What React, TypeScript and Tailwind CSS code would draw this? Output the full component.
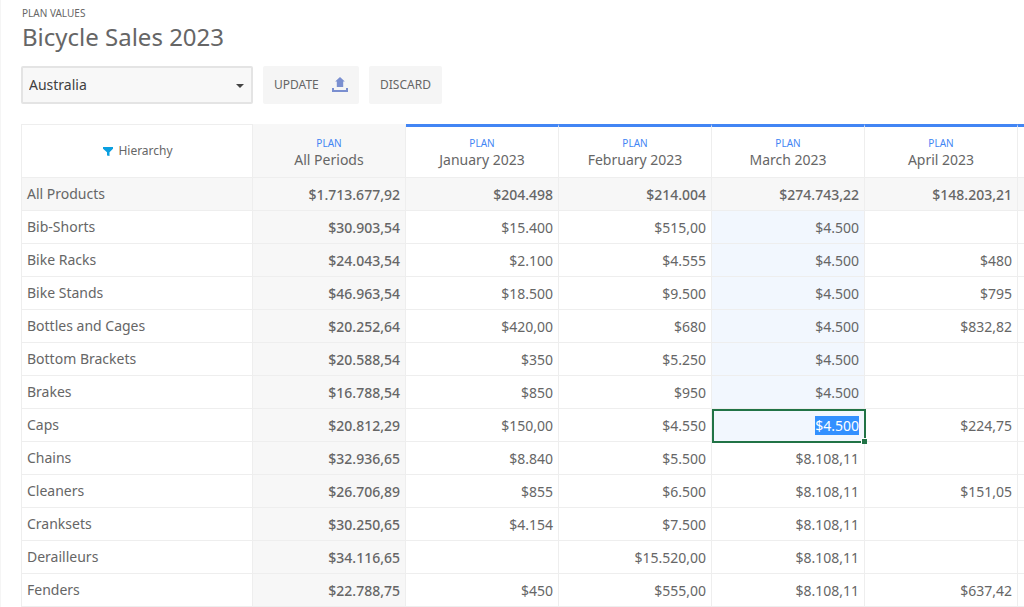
import { useEffect, useRef, useState } from "react";

type Row = { name: string; total: string; months: string[] };

const months = ["January 2023", "February 2023", "March 2023", "April 2023"];

const summary: Row = {
  name: "All Products",
  total: "$1.713.677,92",
  months: ["$204.498", "$214.004", "$274.743,22", "$148.203,21"],
};

const rows: Row[] = [
  { name: "Bib-Shorts", total: "$30.903,54", months: ["$15.400", "$515,00", "$4.500", ""] },
  { name: "Bike Racks", total: "$24.043,54", months: ["$2.100", "$4.555", "$4.500", "$480"] },
  { name: "Bike Stands", total: "$46.963,54", months: ["$18.500", "$9.500", "$4.500", "$795"] },
  { name: "Bottles and Cages", total: "$20.252,64", months: ["$420,00", "$680", "$4.500", "$832,82"] },
  { name: "Bottom Brackets", total: "$20.588,54", months: ["$350", "$5.250", "$4.500", ""] },
  { name: "Brakes", total: "$16.788,54", months: ["$850", "$950", "$4.500", ""] },
  { name: "Caps", total: "$20.812,29", months: ["$150,00", "$4.550", "$4.500", "$224,75"] },
  { name: "Chains", total: "$32.936,65", months: ["$8.840", "$5.500", "$8.108,11", ""] },
  { name: "Cleaners", total: "$26.706,89", months: ["$855", "$6.500", "$8.108,11", "$151,05"] },
  { name: "Cranksets", total: "$30.250,65", months: ["$4.154", "$7.500", "$8.108,11", ""] },
  { name: "Derailleurs", total: "$34.116,65", months: ["", "$15.520,00", "$8.108,11", ""] },
  { name: "Fenders", total: "$22.788,75", months: ["$450", "$555,00", "$8.108,11", "$637,42"] },
];

const ACTIVE_ROW = 6;
const ACTIVE_COL = 2;

function UploadIcon() {
  return (
    <svg width="16" height="16" viewBox="0 0 16 16" fill="#7a8fd0" aria-hidden="true">
      <path d="M8 0 12.8 4.6H11.2V10H4.8V4.6H3.2Z" />
      <path d="M0 11h2v2h12v-2h2v4H0Z" />
    </svg>
  );
}

function FunnelIcon() {
  return (
    <svg width="10" height="9" viewBox="0 0 10 9" fill="#0a9fe0" aria-hidden="true">
      <path d="M0 0H10V1.8L6.5 5.2V9L4 8.4V5.2L0 1.8Z" />
    </svg>
  );
}

function ActiveCell({ initial, label }: { initial: string; label: string }) {
  const ref = useRef<HTMLInputElement>(null);
  const [value, setValue] = useState(initial);
  useEffect(() => {
    ref.current?.focus();
    ref.current?.select();
  }, []);
  return (
    <>
      <input
        ref={ref}
        aria-label={label}
        value={value}
        onChange={(e) => setValue(e.target.value)}
        className="block h-8 w-full bg-transparent px-[5px] text-right leading-[19px] outline-none selection:bg-[#3390ff] selection:text-white"
      />
      <span className="pointer-events-none absolute top-0 -right-[2px] -bottom-[2px] left-0 border-2 border-[#217346]" />
      <span className="pointer-events-none absolute -right-[3px] -bottom-[3px] size-[6px] border-t border-l border-white bg-[#217346]" />
    </>
  );
}

function PlanHeader({ title }: { title: string }) {
  return (
    <div className="flex flex-col items-center gap-px pb-[2px]">
      <span className="text-[10px] leading-4 text-[#4285f4]">PLAN</span>
      <span className="text-sm leading-4">{title}</span>
    </div>
  );
}

const line = "border-r border-b border-[#eeeeee]";

export default function App() {
  return (
    <main className="overflow-hidden border-l border-[#f5f5f5] bg-white pl-5 font-['Noto_Sans','Open_Sans',sans-serif] text-sm text-[#666666]">
      <header className="pt-[3px] pl-px">
        <p className="text-[10px] leading-5">PLAN VALUES</p>
        <h1 className="text-2xl leading-7">Bicycle Sales 2023</h1>
      </header>

      <div className="flex items-center gap-[10px] pt-[15px] pb-5">
        <div className="relative w-[232px]">
          <select
            aria-label="Country"
            className="h-[38px] w-full appearance-none rounded-xs border-2 border-[#e4e4e4] bg-[#f8f8f8] px-[6px] text-sm text-[#404040]"
          >
            <option>Australia</option>
          </select>
          <svg
            className="pointer-events-none absolute top-[18px] right-[9px]"
            width="8"
            height="4"
            viewBox="0 0 8 4"
            fill="#444444"
            aria-hidden="true"
          >
            <path d="M0 0H8L4 4Z" />
          </svg>
        </div>
        <button className="flex h-[38px] w-24 items-center justify-between rounded-xs bg-[#f5f5f5] px-[11px] text-xs">
          UPDATE
          <UploadIcon />
        </button>
        <button className="h-[38px] rounded-xs bg-[#f5f5f5] px-[11px] text-xs">DISCARD</button>
      </div>

      <table className="w-max table-fixed border-separate border-spacing-0">
        <colgroup>
          <col className="w-[232px]" />
          <col className="w-[153px]" />
          {months.map((m) => (
            <col key={m} className="w-[153px]" />
          ))}
          <col className="w-[153px]" />
        </colgroup>
        <thead>
          <tr className="h-[54px]">
            <th scope="col" className="w-[232px] border border-[#eeeeee] p-0 font-normal">
              <div className="flex items-center justify-center gap-[5px] pl-[2px] text-xs">
                <FunnelIcon />
                Hierarchy
              </div>
            </th>
            <th
              scope="col"
              className="w-[153px] border-t-3 border-r border-b border-t-[#f7f7f7] border-r-[#eeeeee] border-b-[#eeeeee] bg-[#f7f7f7] p-0 font-normal"
            >
              <PlanHeader title="All Periods" />
            </th>
            {months.map((m) => (
              <th
                key={m}
                scope="col"
                className="w-[153px] border-t-3 border-r border-b border-t-[#4285f4] border-r-[#eeeeee] border-b-[#eeeeee] p-0 font-normal"
              >
                <PlanHeader title={m} />
              </th>
            ))}
            <td className="w-[153px] border-t-3 border-b border-t-[#4285f4] border-b-[#eeeeee] p-0" />
          </tr>
        </thead>
        <tbody>
          <tr className="h-[33px] bg-[#f7f7f7]">
            <th scope="row" className={`border-l px-[5px] py-0 text-left font-normal ${line}`}>
              {summary.name}
            </th>
            <td className={`px-[5px] pt-[2px] pb-0 text-right font-medium ${line}`}>{summary.total}</td>
            {summary.months.map((v, c) => (
              <td key={months[c]} className={`px-[5px] pt-[2px] pb-0 text-right font-medium ${line}`}>
                {v}
              </td>
            ))}
            <td className="border-b border-[#eeeeee] p-0" />
          </tr>
          {rows.map((row, r) => (
            <tr key={row.name} className="h-[33px]">
              <th scope="row" className={`border-l px-[5px] py-0 text-left font-normal ${line}`}>
                {row.name}
              </th>
              <td className={`bg-[#f7f7f7] px-[5px] pt-[2px] pb-0 text-right font-medium ${line}`}>{row.total}</td>
              {row.months.map((v, c) =>
                r === ACTIVE_ROW && c === ACTIVE_COL ? (
                  <td key={months[c]} className={`relative bg-[#f2f7fe] p-0 ${line}`}>
                    <ActiveCell initial={v} label={`${row.name}, ${months[c]}`} />
                  </td>
                ) : (
                  <td
                    key={months[c]}
                    className={`px-[5px] pt-[2px] pb-0 text-right ${line} ${
                      c === ACTIVE_COL && r < ACTIVE_ROW ? "bg-[#f2f7fe]" : ""
                    }`}
                  >
                    {v}
                  </td>
                ),
              )}
              <td className="border-b border-[#eeeeee] p-0" />
            </tr>
          ))}
        </tbody>
      </table>
    </main>
  );
}
